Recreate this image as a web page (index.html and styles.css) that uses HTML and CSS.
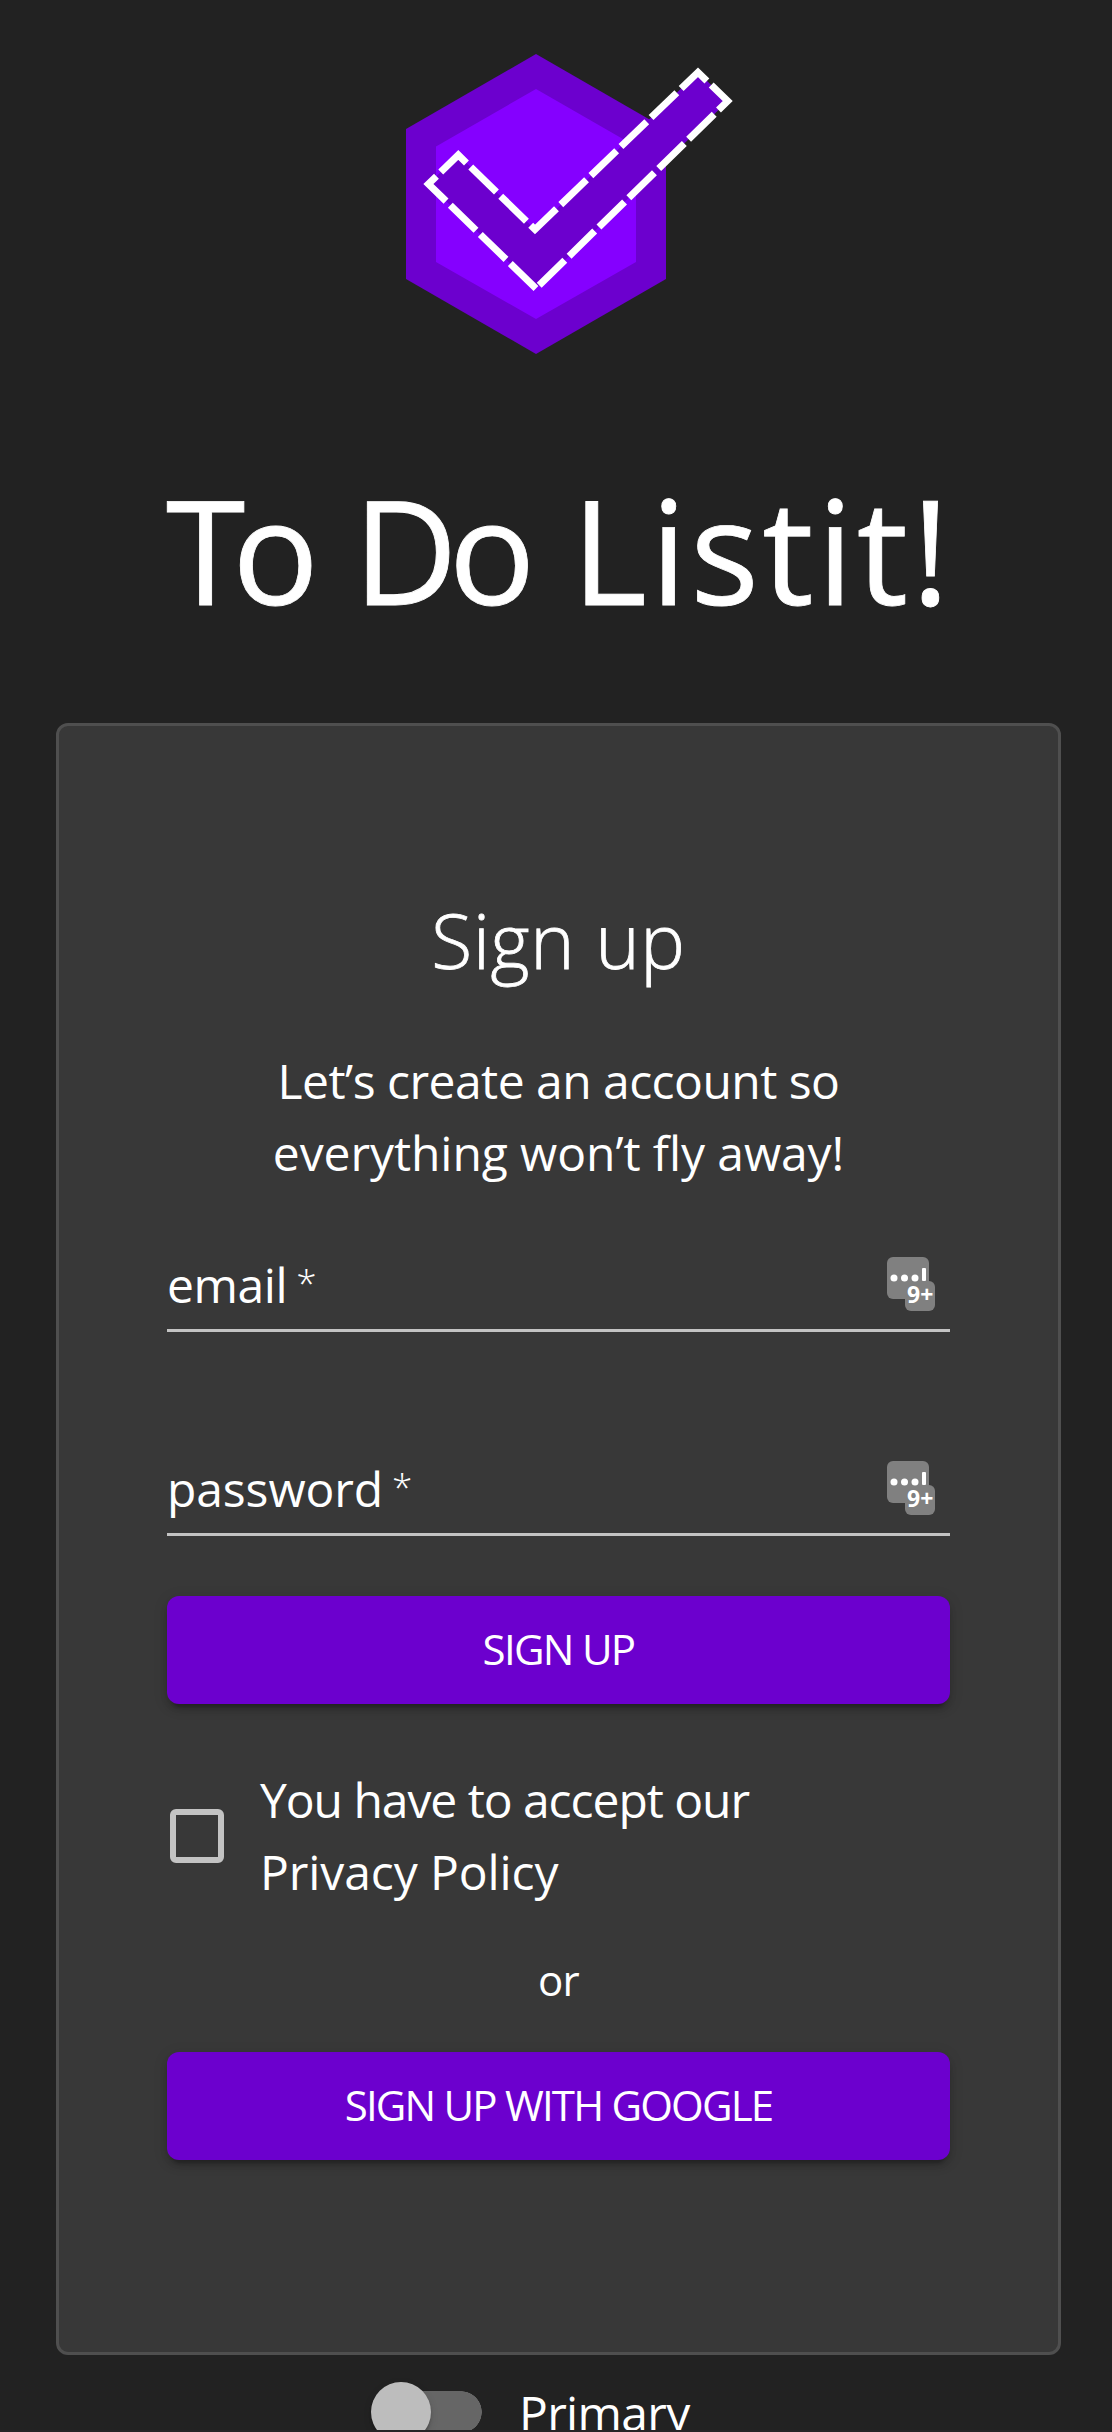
FILE: index.html
```html
<!DOCTYPE html>
<html lang="en">
<head>
<meta charset="utf-8">
<title>To Do Listit!</title>
<link rel="stylesheet" href="styles.css">
</head>
<body>
<div class="page">
  <header class="header">
    <svg class="logo" viewBox="0 0 340 310" aria-hidden="true">
      <path class="logo-outer" d="M136 4 266 79V229L136 304 6 229V79Z"/>
      <path class="logo-inner" d="M136 39 236 96.500V212L136 269 36 212V96.500Z"/>
      <path class="logo-check" d="M136 238.500 28.400 134 58.300 105 135 179.500 298 22.300 327.700 51Z"/>
    </svg>
    <h1 class="title"><span class="t-to">To</span> <span class="t-do">Do</span> <span class="t-listit">Listit!</span></h1>
  </header>
  <main class="card">
    <h2 class="heading"><span class="t-heading">Sign up</span></h2>
    <p class="intro"><span class="t-intro1">Let’s create an account so</span><br><span class="t-intro2">everything won’t fly away!</span></p>
    <form class="form">
      <div class="field">
        <label class="label"><span class="t-email">email</span><span class="star">*</span></label>
        <svg class="manager" viewBox="0 0 48 54" aria-hidden="true"><rect width="42" height="42" rx="6"/><rect x="18" y="24" width="30" height="30" rx="6"/><g class="marks"><circle cx="7" cy="21" r="3.500"/><circle cx="17.500" cy="21" r="3.500"/><circle cx="28" cy="21" r="3.500"/><rect x="35" y="11" width="4" height="13" rx="1"/><text x="20" y="45.500">9+</text></g></svg>
      </div>
      <div class="field">
        <label class="label"><span class="t-password">password</span><span class="star">*</span></label>
        <svg class="manager" viewBox="0 0 48 54" aria-hidden="true"><rect width="42" height="42" rx="6"/><rect x="18" y="24" width="30" height="30" rx="6"/><g class="marks"><circle cx="7" cy="21" r="3.500"/><circle cx="17.500" cy="21" r="3.500"/><circle cx="28" cy="21" r="3.500"/><rect x="35" y="11" width="4" height="13" rx="1"/><text x="20" y="45.500">9+</text></g></svg>
      </div>
      <button class="button" type="button"><span class="t-signup">SIGN UP</span></button>
      <div class="consent">
        <span class="checkbox"></span>
        <p class="consent-text"><span class="t-consent1">You have to accept our</span><br><span class="t-consent2">Privacy Policy</span></p>
      </div>
      <p class="or"><span class="t-or">or</span></p>
      <button class="button" type="button"><span class="t-google">SIGN UP WITH GOOGLE</span></button>
    </form>
  </main>
  <footer class="theme">
    <span class="switch"><span class="thumb"></span></span>
    <span class="theme-label"><span class="t-primary">Primary</span></span>
  </footer>
</div>
</body>
</html>
```
FILE: styles.css
```css
* { box-sizing: border-box; }
body { margin: 0; background: #282528; color: #fff; font-family: "Open Sans", "Noto Sans", sans-serif; }
h1, h2, p { margin: 0; font-weight: 400; }
.page { width: 1112px; height: 2430px; overflow: hidden; background: #222; }
.header { height: 723px; padding: 50px 0 0; }
.logo { display: block; width: 340px; height: 310px; margin-left: 400px; }
.logo-outer { fill: #6c00ce; }
.logo-inner { fill: #8500ff; }
.logo-check { fill: #6c00ce; stroke: #fff; stroke-width: 7; stroke-dasharray: 35.8 6; }
.title { margin: 89px 0 0 166px; font-size: 144px; line-height: 200px; white-space: nowrap; -webkit-text-stroke: .8px #fff; }
.t-to { letter-spacing: -13px; }
.t-do { margin-left: 10px; letter-spacing: -9px; }
.t-listit { margin-left: 8px; letter-spacing: 3.4px; }
.card { width: 1005px; height: 1632px; margin-left: 56px; padding: 160px 108px 0; background: #383838; border: 3px solid #4f4f4f; border-radius: 12px; white-space: nowrap; }
.heading { font-size: 75px; font-weight: 300; line-height: 108px; text-align: center; -webkit-text-stroke: .8px #fff; }
.t-heading { letter-spacing: .7px; }
.intro { margin-top: 51px; font-size: 48px; line-height: 72px; text-align: center; }
.t-intro1 { letter-spacing: -.53px; }
.t-intro2 { letter-spacing: -.08px; }
.form { display: flex; flex-direction: column; }
.field { display: flex; justify-content: space-between; height: 96px; margin-top: 47px; padding: 21px 15px 0 0; border-bottom: 3px solid #c3c3c3; }
.field + .field { margin-top: 108px; }
.label { font-size: 48px; line-height: 56px; }
.t-email { letter-spacing: -.4px; }
.t-password { letter-spacing: -.1px; }
.star { margin-left: 9px; font-weight: 300; font-size: 37px; vertical-align: 6px; line-height: 1; }
.manager { width: 48px; height: 54px; fill: #808080; }
.marks { fill: #fff; font-size: 23px; font-weight: 700; }
.button { width: 783px; height: 108px; margin-top: 60px; padding: 0 0 3px; border: 0; border-radius: 12px; background: #6c00ce; color: #fff; font: 400 42px/73px "Open Sans", "Noto Sans", sans-serif; box-shadow: 0 9px 3px -6px rgba(0,0,0,.2), 0 6px 6px rgba(0,0,0,.14), 0 3px 15px rgba(0,0,0,.12); }
.t-signup { letter-spacing: -1.7px; }
.t-google { letter-spacing: -1.8px; }
.consent { display: flex; gap: 36px; align-items: center; height: 144px; margin-top: 60px; padding-left: 3px; }
.checkbox { width: 54px; height: 54px; border: 6px solid #c3c3c3; border-radius: 6px; }
.consent-text { font-size: 48px; line-height: 72px; }
.t-consent1 { letter-spacing: -1.05px; }
.t-consent2 { letter-spacing: -.1px; }
.or { height: 63px; margin-top: 40px; font-size: 42px; line-height: 63px; text-align: center; }
.t-or { letter-spacing: -.8px; }
.or + .button { margin-top: 41px; }
.theme { display: flex; padding: 27px 0 0 371px; }
.switch { width: 111px; height: 60px; background: linear-gradient(#666, #666) no-repeat 9px 9px / 80px 42px, radial-gradient(circle at center, #666 20.5px, transparent 21px) no-repeat 69px 9px / 42px 42px; }
.thumb { display: block; width: 60px; height: 60px; border-radius: 50%; background: #bdbdbd; box-shadow: 0 6px 3px -3px rgba(0,0,0,.2), 0 3px 3px rgba(0,0,0,.14), 0 3px 9px rgba(0,0,0,.12); }
.theme-label { margin-left: 37px; font-size: 48px; line-height: 62px; }
.t-primary { letter-spacing: -.7px; }
```
